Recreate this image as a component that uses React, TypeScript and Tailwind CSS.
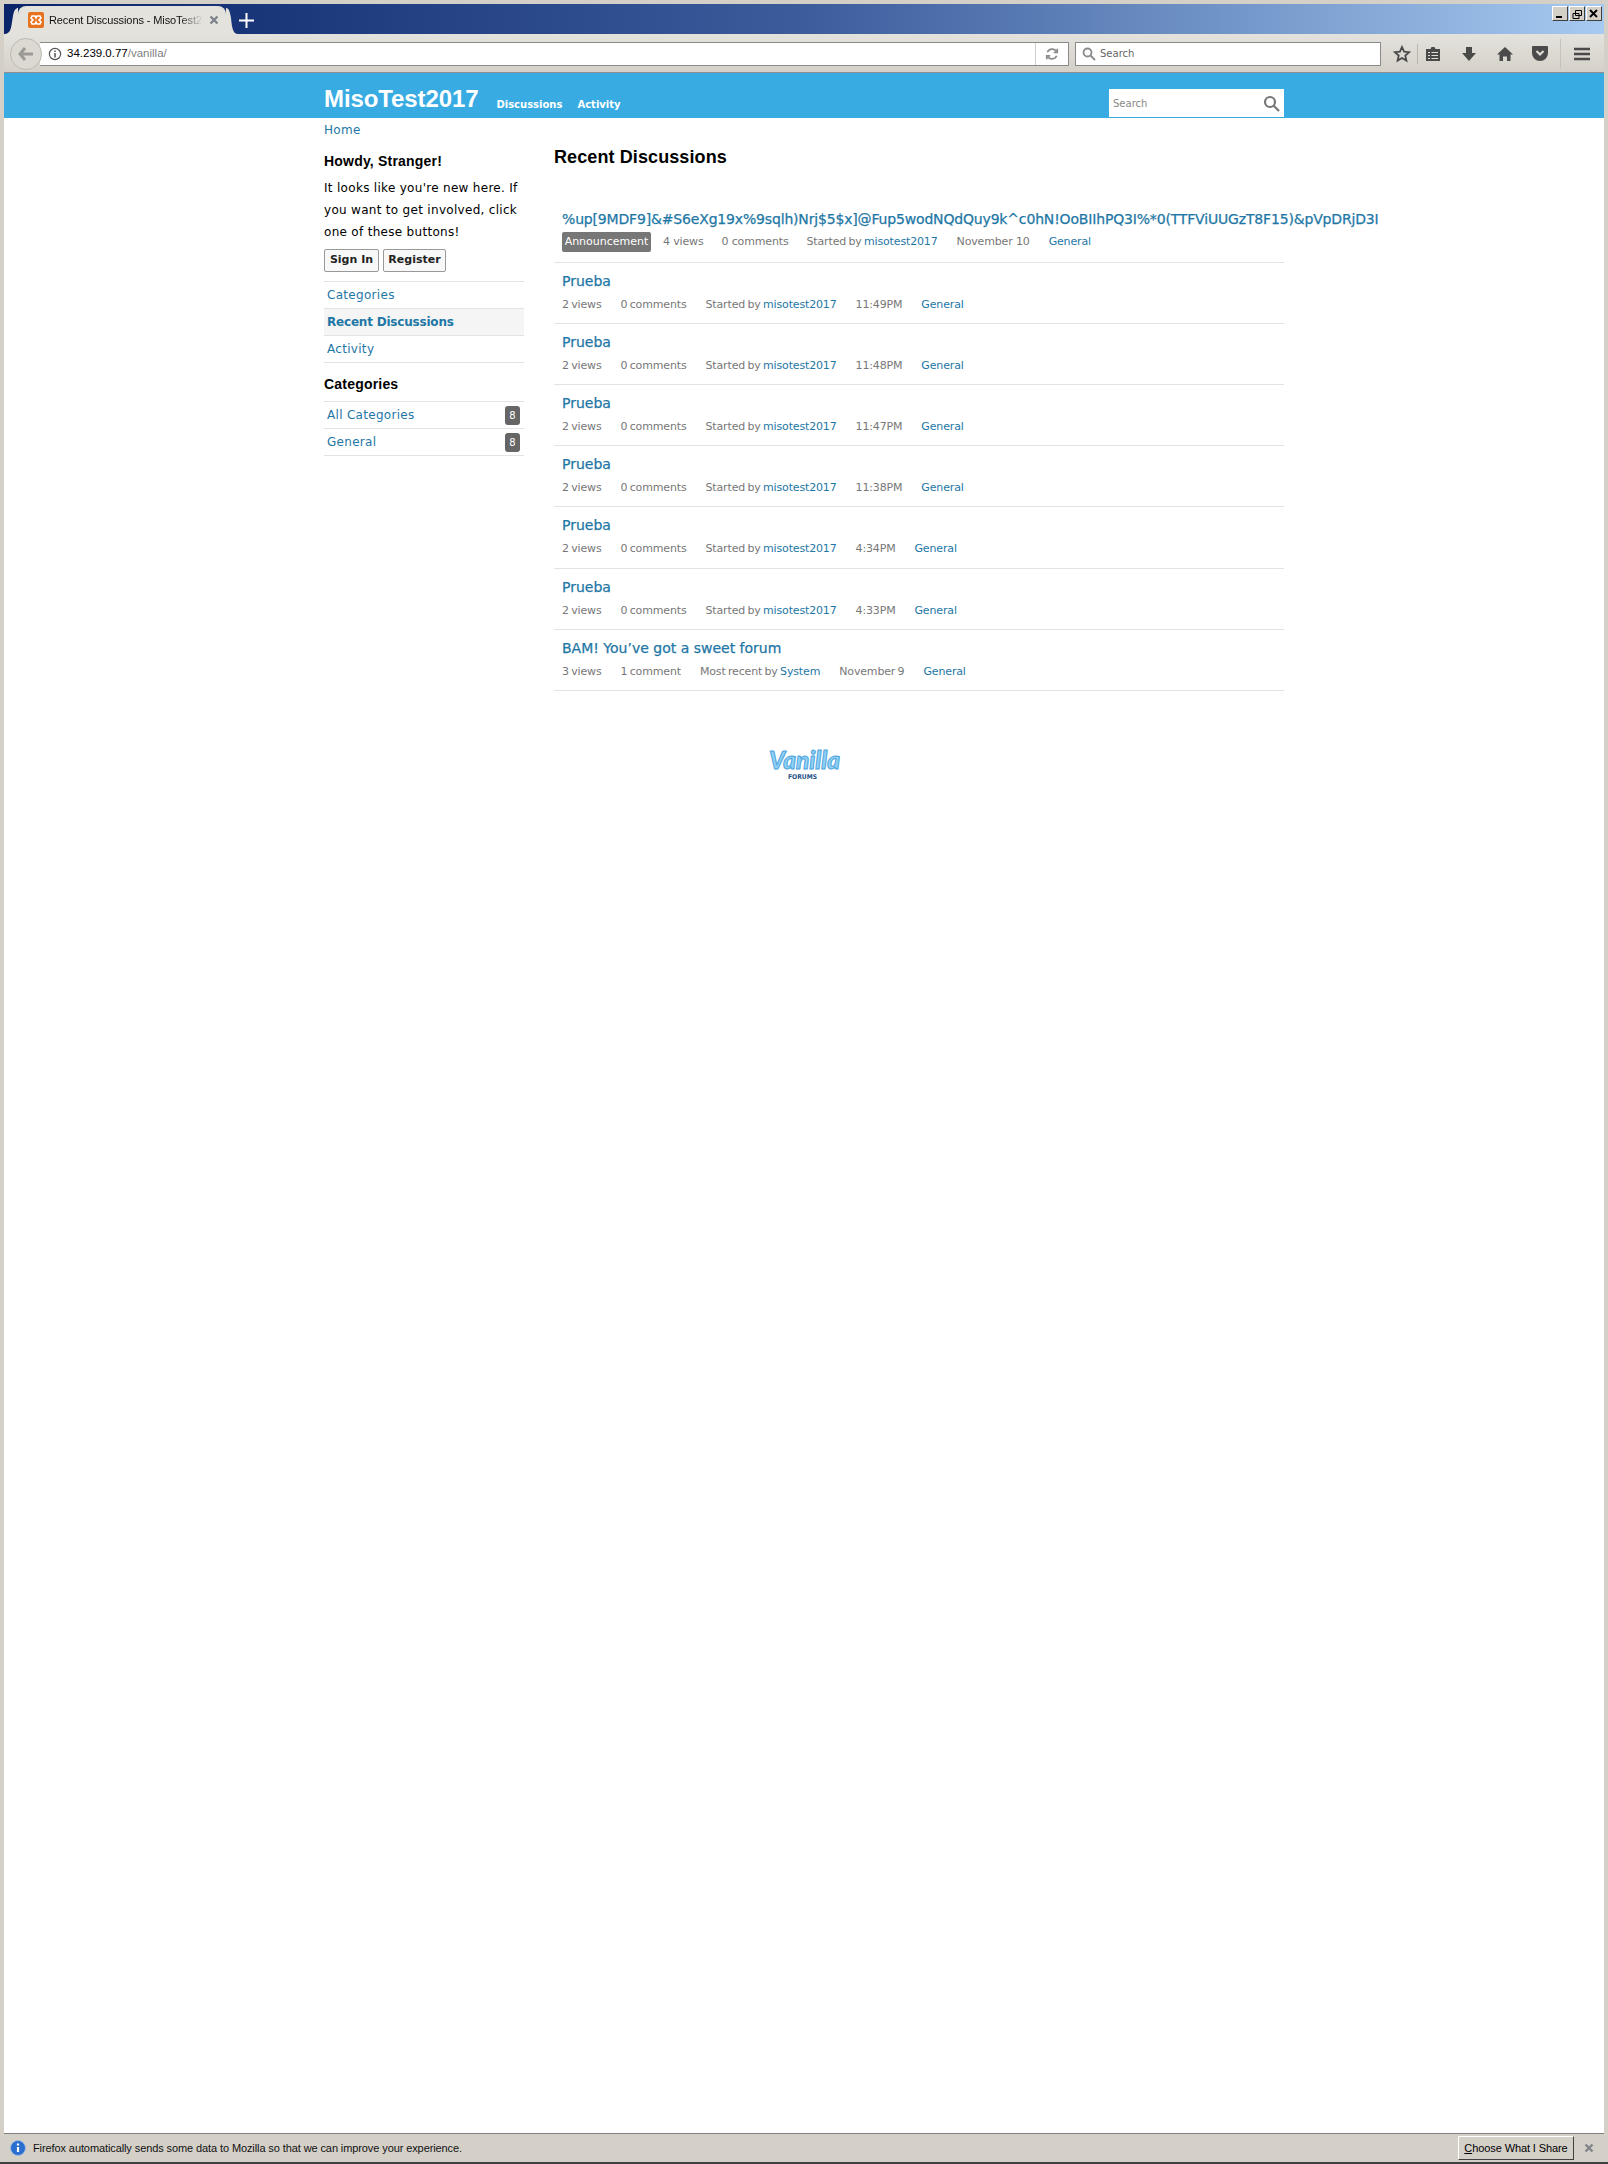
import React from "react";

const dejavu = "font-['DejaVu_Sans',sans-serif]";
const link = "text-[#1e77a5]";
const linkTitle = "text-[#1e77a5] [-webkit-text-stroke:0.25px_#1e77a5]";

type Row = {
  title: string;
  views: string;
  comments: string;
  by: string;
  who: string;
  when: string;
  tall?: boolean;
};

const rows: Row[] = [
  { title: "Prueba", views: "2 views", comments: "0 comments", by: "Started by", who: "misotest2017", when: "11:49PM" },
  { title: "Prueba", views: "2 views", comments: "0 comments", by: "Started by", who: "misotest2017", when: "11:48PM" },
  { title: "Prueba", views: "2 views", comments: "0 comments", by: "Started by", who: "misotest2017", when: "11:47PM" },
  { title: "Prueba", views: "2 views", comments: "0 comments", by: "Started by", who: "misotest2017", when: "11:38PM" },
  { title: "Prueba", views: "2 views", comments: "0 comments", by: "Started by", who: "misotest2017", when: "4:34PM", tall: true },
  { title: "Prueba", views: "2 views", comments: "0 comments", by: "Started by", who: "misotest2017", when: "4:33PM" },
  { title: "BAM! You’ve got a sweet forum", views: "3 views", comments: "1 comment", by: "Most recent by", who: "System", when: "November 9" },
];

function Meta({ row }: { row: Row }) {
  return (
    <div className="flex h-[18px] items-center gap-[19px] text-[11px] tracking-[-0.15px] text-[#777777] [word-spacing:-1px]">
      <span>{row.views}</span>
      <span>{row.comments}</span>
      <span>
        {row.by} <span className={link}>{row.who}</span>
      </span>
      <span>{row.when}</span>
      <span className={link}>General</span>
    </div>
  );
}

function TitleBar() {
  return (
    <div className="flex h-[30px] shrink-0 items-end bg-gradient-to-r from-[#0a246a] via-[#3c5c9c] to-[#a6caf0]">
      <svg width="14" height="28" viewBox="0 0 14 28" className="shrink-0">
        <path d="M0 28C8 28 7 20 9 10 10 4 12 2 14 2V28Z" fill="#e4e2dd" />
      </svg>
      <div className="flex h-[28px] w-[208px] items-center rounded-t-[8px] bg-[#e4e2dd] pl-[10px]">
        <svg width="16" height="16" viewBox="0 0 16 16" className="shrink-0">
          <rect width="16" height="16" rx="2" fill="#e8731f" />
          <path d="M4 4h3l1 2 1-2h3l1 2-2 2 2 2-1 2H9L8 10l-1 2H4l-1-2 2-2-2-2Z" fill="none" stroke="#fff" strokeWidth="1.6" />
        </svg>
        <span className="ml-[5px] w-[154px] whitespace-nowrap font-['Liberation_Sans',sans-serif] text-[11px] tracking-[-0.1px] text-[#111111] [mask-image:linear-gradient(to_right,black_85%,transparent)]">
          Recent Discussions - MisoTest20
        </span>
        <svg width="10" height="10" viewBox="0 0 10 10" className="ml-[6px] shrink-0">
          <path d="M1.5 1.5l7 7m0-7l-7 7" stroke="#7d828a" strokeWidth="2.4" />
        </svg>
      </div>
      <svg width="12" height="28" viewBox="0 0 12 28" className="shrink-0">
        <path d="M0 2C3 2 4 6 5 12 6 22 7 28 12 28H0Z" fill="#e4e2dd" />
      </svg>
      <svg width="15" height="15" viewBox="0 0 15 15" className="mb-[6px] ml-[1px] shrink-0">
        <path d="M7.5 0v15M0 7.5h15" stroke="#fff" strokeWidth="2" />
      </svg>
      <div className="ml-auto mb-[13px] mr-[2px] flex gap-[1px]">
        <WinButton>
          <path d="M3 10h6" stroke="#000" strokeWidth="2" />
        </WinButton>
        <WinButton>
          <path d="M5.5 3.5h6v5h-6zM3 6.500h6v5H3z" fill="#d4d0c8" stroke="#000" strokeWidth="1" />
        </WinButton>
        <WinButton>
          <path d="M3 3l7 7m0-7l-7 7" stroke="#000" strokeWidth="1.8" />
        </WinButton>
      </div>
    </div>
  );
}

function WinButton({ children }: { children: React.ReactNode }) {
  return (
    <div className="h-[15px] w-[16px] border border-b-[#404040] border-l-white border-r-[#404040] border-t-white bg-[#d4d0c8]">
      <svg width="14" height="13" viewBox="0 0 14 13">
        {children}
      </svg>
    </div>
  );
}

function Toolbar() {
  return (
    <div className="flex h-[39px] shrink-0 items-center border-b border-[#8e8e8e] bg-gradient-to-b from-[#e4e2dd] to-[#d5d1c9] pt-[1px]">
      <div className="z-10 ml-[6px] flex h-[32px] w-[32px] shrink-0 items-center justify-center rounded-full border border-[#bdbab2] bg-[#dcd9d2]">
        <svg width="16" height="14" viewBox="0 0 16 14">
          <path d="M7 1L2 7l5 6M2 7h13" fill="none" stroke="#9c9a96" strokeWidth="3" />
        </svg>
      </div>
      <div className="-ml-[2px] flex h-[24px] w-[1029px] shrink-0 items-center border-y border-r border-[#8a8a8a] bg-white pl-[8px] font-['Liberation_Sans',sans-serif] text-[11.5px]">
        <svg width="14" height="14" viewBox="0 0 14 14" className="shrink-0">
          <circle cx="7" cy="7" r="5.6" fill="none" stroke="#555" strokeWidth="1.2" />
          <path d="M7 6v4.500M7 3.500v1.500" stroke="#555" strokeWidth="1.500" />
        </svg>
        <span className="ml-[5px] text-black">34.239.0.77</span>
        <span className="text-[#808080]">/vanilla/</span>
        <div className="ml-auto flex h-full items-center border-l border-[#cfcfcf] px-[9px]">
          <svg width="14" height="14" viewBox="0 0 24 24" fill="none" stroke="#8c8c8c" strokeWidth="3">
            <path d="M20 8A9 9 0 0 0 4 9M4 16a9 9 0 0 0 16-1" />
            <path d="M21 3v6h-6M3 21v-6h6" />
          </svg>
        </div>
      </div>
      <div className="ml-[6px] flex h-[24px] w-[306px] shrink-0 items-center gap-[4px] border border-[#8a8a8a] bg-white pl-[6px] font-['DejaVu_Sans',sans-serif] text-[10px] text-[#666666]">
        <svg width="14" height="14" viewBox="0 0 14 14" fill="none" stroke="#8a8a8a" strokeWidth="1.800">
          <circle cx="5.500" cy="5.500" r="4" />
          <path d="M8.500 8.500L13 13" />
        </svg>
        <span>Search</span>
      </div>
      <div className="ml-[12px] flex items-center text-[#4a4a4a]">
        <svg width="18" height="18" viewBox="0 0 18 18" className="shrink-0">
          <path d="M9 2l2.100 4.700 5 .5-3.800 3.400 1.100 5L9 13l-4.400 2.600 1.100-5L1.900 7.200l5-.5Z" fill="none" stroke="#4a4a4a" strokeWidth="1.800" />
        </svg>
        <div className="ml-[6px] h-[20px] w-px bg-[#b9b6ae]" />
        <svg width="16" height="16" viewBox="0 0 16 16" className="ml-[7px] shrink-0">
          <path d="M1 3h4.500l1-2h3l1 2H15v12H1Z" fill="#4a4a4a" />
          <path d="M3 6.500h2M6.500 6.500H13M3 9.500h2M6.500 9.500H13M3 12.500h2M6.500 12.500H13" stroke="#e0ddd7" strokeWidth="1" />
        </svg>
        <svg width="16" height="16" viewBox="0 0 16 16" className="ml-[20px] shrink-0">
          <path d="M5 1h6v6h4l-7 8-7-8h4Z" fill="#4a4a4a" />
        </svg>
        <svg width="16" height="16" viewBox="0 0 16 16" className="ml-[20px] shrink-0">
          <path d="M8 1L0 8.500h2.500V15H6v-4.500h4V15h3.500V8.500H16Z" fill="#4a4a4a" />
        </svg>
        <svg width="16" height="15" viewBox="0 0 16 15" className="ml-[19px] shrink-0">
          <path d="M1 0h14q1 0 1 1v6a8 8 0 0 1-16 0V1q0-1 1-1Z" fill="#4a4a4a" />
          <path d="M4.500 5L8 8.500 11.500 5" fill="none" stroke="#e0ddd7" strokeWidth="2.200" />
        </svg>
        <div className="ml-[12px] h-[30px] w-px bg-[#c6c3bb]" />
        <svg width="16" height="14" viewBox="0 0 16 14" className="ml-[13px] shrink-0">
          <path d="M0 2h16M0 7h16M0 12h16" stroke="#4a4a4a" strokeWidth="2.600" />
        </svg>
      </div>
    </div>
  );
}

function VanillaLogo() {
  return (
    <svg width="84" height="44" viewBox="0 0 84 44">
      <text
        x="6"
        y="26"
        textLength="71"
        lengthAdjust="spacingAndGlyphs"
        fontFamily="Lato"
        fontWeight="900"
        fontStyle="italic"
        fontSize="25"
        fill="#8fd0f4"
        stroke="#4aa3de"
        strokeWidth="1"
        strokeLinejoin="round"
      >
        Vanilla
      </text>
      <text x="25" y="36" textLength="29" lengthAdjust="spacingAndGlyphs" fontFamily="DejaVu Sans" fontWeight="700" fontSize="6.500" fill="#1e4f86">
        FORUMS
      </text>
    </svg>
  );
}

function SideLink({ children, active, badge, first }: { children: React.ReactNode; active?: boolean; badge?: string; first?: boolean }) {
  return (
    <div
      className={`flex items-center justify-between border-b border-[#e3e3e3] px-[3px] text-[12px] ${link} ${first ? "h-[28px] border-t" : "h-[27px]"} ${active ? "bg-[#f5f5f5] font-bold tracking-[-0.2px]" : "tracking-[0.3px]"}`}
    >
      <span>{children}</span>
      {badge && <span className="mr-[1px] flex h-[19px] w-[15px] items-center justify-center rounded-[3px] bg-[#666666] text-[10px] text-white">{badge}</span>}
    </div>
  );
}

function Forum() {
  return (
    <div className={`h-full bg-white ${dejavu}`}>
      <div className="h-[45px] bg-[#38abe3]">
        <div className="mx-auto flex h-full w-[960px] items-center">
          <span className="mt-[6px] font-['Liberation_Sans',sans-serif] text-[24px] font-bold tracking-[-0.1px] text-white">MisoTest2017</span>
          <span className="ml-[18px] mt-[17px] text-[10px] font-bold text-white">Discussions</span>
          <span className="ml-[15px] mt-[17px] text-[10px] font-bold text-white">Activity</span>
          <div className="mb-[1px] ml-auto flex h-[28px] w-[175px] items-center justify-between self-end bg-white px-[4px] text-[10px] text-[#888888]">
            <span>Search</span>
            <svg width="17" height="17" viewBox="0 0 17 17" fill="none" stroke="#777777" strokeWidth="2.200">
              <circle cx="7" cy="7" r="5" />
              <path d="M10.500 10.500L16 16" />
            </svg>
          </div>
        </div>
      </div>
      <div className="mx-auto flex w-[960px]">
        <aside className="w-[200px] shrink-0">
          <div className={`mt-[3px] h-[18px] text-[12px] leading-[18px] tracking-[0.3px] ${link}`}>Home</div>
          <h4 className="mt-[13px] font-['Liberation_Sans',sans-serif] text-[14px] font-bold leading-[18px] tracking-[0.2px] text-black">Howdy, Stranger!</h4>
          <p className="mt-[7px] text-[12px] leading-[22px] tracking-[0.3px] text-black">
            It looks like you're new here. If you want to get involved, click one of these buttons!
          </p>
          <div className="mt-[6px] flex gap-[4px]">
            <button className="h-[23px] w-[55px] rounded-[2px] border border-[#999999] bg-[#f8f8f8] text-[11px] font-bold text-[#222222]">Sign In</button>
            <button className="h-[23px] w-[63px] rounded-[2px] border border-[#999999] bg-[#f8f8f8] text-[11px] font-bold text-[#222222]">Register</button>
          </div>
          <div className="mt-[9px]">
            <SideLink first>Categories</SideLink>
            <SideLink active>Recent Discussions</SideLink>
            <SideLink>Activity</SideLink>
          </div>
          <h4 className="mt-[12px] h-[26px] font-['Liberation_Sans',sans-serif] text-[14px] font-bold leading-[18px] tracking-[0.2px] text-black">Categories</h4>
          <div>
            <SideLink first badge="8">All Categories</SideLink>
            <SideLink badge="8">General</SideLink>
          </div>
        </aside>
        <main className="ml-[30px] w-[730px]">
          <h1 className="mt-[27px] h-[24px] font-['Liberation_Sans',sans-serif] text-[18px] font-bold leading-[24px] tracking-[0.1px] text-black">Recent Discussions</h1>
          <div className="mt-[40px] h-[54px] border-b border-[#e3e3e3] pl-[8px]">
            <div className={`h-[20px] whitespace-nowrap text-[14px] leading-[20px] tracking-[-0.17px] ${linkTitle}`}>
              %up[9MDF9]&amp;#S6eXg19x%9sqlh)Nrj$5$x]@Fup5wodNQdQuy9k^c0hN!OoBIIhPQ3I%*0(TTFViUUGzT8F15)&amp;pVpDRjD3I
            </div>
            <div className="mt-[3px] flex h-[20px] items-center gap-[12px] text-[11px] text-[#777777]">
              <span className="flex h-[20px] w-[89px] items-center justify-center rounded-[2px] bg-[#777777] text-white">Announcement</span>
              <span className="tracking-[-0.15px]">4 views</span>
              <span className="ml-[6px] tracking-[-0.15px]">0 comments</span>
              <span className="ml-[6px] tracking-[-0.15px] [word-spacing:-1px]">
                Started by <span className={link}>misotest2017</span>
              </span>
              <span className="ml-[7px] tracking-[-0.15px]">November 10</span>
              <span className={`ml-[7px] tracking-[-0.15px] ${link}`}>General</span>
            </div>
          </div>
          {rows.map((row, i) => (
            <div key={i} className={`border-b border-[#e3e3e3] pl-[8px] pt-[8px] ${row.tall ? "h-[62px]" : "h-[61px]"}`}>
              <div className={`h-[20px] text-[14px] leading-[20px] ${linkTitle}`}>{row.title}</div>
              <div className="mt-[5px]">
                <Meta row={row} />
              </div>
            </div>
          ))}
        </main>
      </div>
      <div className="ml-[759px] mt-[52px] w-[84px]">
        <VanillaLogo />
      </div>
    </div>
  );
}

function NoticeBar() {
  return (
    <div className="flex h-[29px] shrink-0 items-center border-t border-[#808080] bg-[#d4d0c8] pl-[6px] font-['Liberation_Sans',sans-serif] text-[11px] tracking-[-0.1px] text-[#111111]">
      <svg width="16" height="16" viewBox="0 0 16 16" className="shrink-0">
        <circle cx="8" cy="8" r="7.500" fill="#2a6fd0" stroke="#9bb8e0" />
        <path d="M8 7v5M8 3.500v2" stroke="#fff" strokeWidth="2.200" />
      </svg>
      <span className="ml-[7px]">Firefox automatically sends some data to Mozilla so that we can improve your experience.</span>
      <button className="ml-auto flex h-[24px] w-[116px] items-center justify-center whitespace-nowrap border border-b-[#404040] border-l-white border-r-[#404040] border-t-white bg-[#d4d0c8] text-[11px] text-black">
        <span>
          <span className="underline">C</span>hoose What I Share
        </span>
      </button>
      <svg width="10" height="10" viewBox="0 0 10 10" className="mx-[10px] shrink-0">
        <path d="M1.500 1.500l7 7m0-7l-7 7" stroke="#80848a" strokeWidth="2.400" />
      </svg>
    </div>
  );
}

export default function App() {
  return (
    <div className="flex h-[2164px] w-[1608px] flex-col overflow-hidden border-b-2 border-b-[#404040] bg-[#d4d0c8] px-[4px] pt-[4px]">
      <TitleBar />
      <Toolbar />
      <div className="min-h-0 flex-1">
        <Forum />
      </div>
      <NoticeBar />
    </div>
  );
}
